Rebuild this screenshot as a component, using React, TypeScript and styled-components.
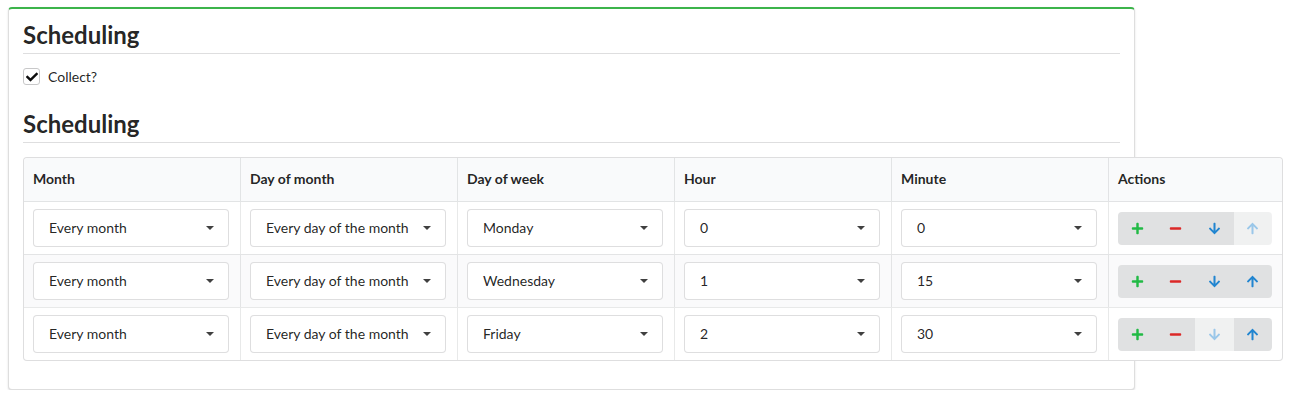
import React from 'react';
import styled, { createGlobalStyle, css } from 'styled-components';
import { FaPlus, FaMinus, FaArrowDown, FaArrowUp, FaCheck } from 'react-icons/fa';

const GlobalStyle = createGlobalStyle`
  html, body {
    margin: 0;
    padding: 0;
    background: #ffffff;
  }
  body {
    padding: 7px 0 0 8px;
    font-family: Lato, 'Noto Sans', 'Liberation Sans', sans-serif;
    font-size: 14px;
    line-height: 1.4285em;
    color: rgba(0, 0, 0, 0.87);
  }
  * {
    box-sizing: border-box;
  }
`;

const Segment = styled.div`
  width: 1127px;
  background: #fff;
  border: 1px solid rgba(34, 36, 38, 0.15);
  border-top: 2px solid #3cb44b;
  border-radius: 4px;
  box-shadow: 0 1px 2px 0 rgba(34, 36, 38, 0.15);
  padding: 14px;
`;

const DividingHeader = styled.h3<{ $first?: boolean }>`
  font-family: Lato, 'Noto Sans', sans-serif;
  font-weight: 700;
  font-size: 24px;
  line-height: 30px;
  margin: ${(p) => (p.$first ? '-3px 0 14px' : '24px 0 14px')};
  padding-bottom: 3px;
  border-bottom: 1px solid rgba(34, 36, 38, 0.15);
  color: rgba(0, 0, 0, 0.87);
`;

const CheckboxField = styled.label`
  display: flex;
  align-items: center;
  gap: 8px;
  height: 17px;
  font-size: 14px;
  cursor: pointer;
`;

const Box = styled.span`
  width: 17px;
  height: 17px;
  border: 1px solid #c8c8c9;
  border-radius: 3px;
  display: flex;
  align-items: center;
  justify-content: center;
  color: rgba(0, 0, 0, 0.95);
`;

const Table = styled.table`
  width: 1260px;
  table-layout: fixed;
  border-collapse: separate;
  border-spacing: 0;
  border: 1px solid rgba(34, 36, 38, 0.15);
  border-radius: 4px;
  margin: 14px 0;
  background: #fff;
`;

const Th = styled.th`
  text-align: left;
  font-weight: 700;
  font-size: 14px;
  line-height: 20px;
  padding: 11px 10px 12px 9px;
  background: #f9fafb;
  border-bottom: 1px solid rgba(34, 36, 38, 0.1);
  & + & {
    border-left: 1px solid rgba(34, 36, 38, 0.1);
  }
  &:first-child {
    border-top-left-radius: 4px;
  }
  &:last-child {
    border-top-right-radius: 4px;
  }
`;

const Tr = styled.tr`
  &:nth-child(even) td {
    background: rgba(0, 0, 50, 0.02);
  }
  & + & td {
    border-top: 1px solid rgba(34, 36, 38, 0.1);
  }
`;

const Td = styled.td`
  padding: 7px 10px 7px 9px;
  vertical-align: middle;
  & + & {
    border-left: 1px solid rgba(34, 36, 38, 0.1);
  }
`;

const Select = styled.div`
  position: relative;
  height: 38px;
  width: 196px;
  background: #fff;
  border: 1px solid rgba(34, 36, 38, 0.15);
  border-radius: 4px;
  padding: 0 30px 0 15px;
  display: flex;
  align-items: center;
  font-size: 14px;
  white-space: nowrap;
  overflow: hidden;

  &::after {
    content: '';
    position: absolute;
    right: 14px;
    top: 50%;
    margin-top: -2px;
    border-left: 4px solid transparent;
    border-right: 4px solid transparent;
    border-top: 4px solid rgba(0, 0, 0, 0.75);
  }
`;

const ButtonGroup = styled.div`
  display: flex;
  width: 154px;
  height: 33px;
`;

const ActionButton = styled.button<{ $color: string; $disabled?: boolean }>`
  flex: 1;
  border: none;
  margin: 0;
  padding: 0;
  background: #e0e1e2;
  color: ${(p) => p.$color};
  display: flex;
  align-items: center;
  justify-content: center;
  cursor: pointer;
  &:first-child {
    border-radius: 4px 0 0 4px;
  }
  &:last-child {
    border-radius: 0 4px 4px 0;
  }
  ${(p) =>
    p.$disabled &&
    css`
      opacity: 0.45;
      cursor: default;
    `}
`;

const GREEN = '#21ba45';
const RED = '#db2828';
const BLUE = '#2185d0';

const rows = [
  { month: 'Every month', dom: 'Every day of the month', dow: 'Monday', hour: '0', minute: '0' },
  { month: 'Every month', dom: 'Every day of the month', dow: 'Wednesday', hour: '1', minute: '15' },
  { month: 'Every month', dom: 'Every day of the month', dow: 'Friday', hour: '2', minute: '30' },
];

const App: React.FC = () => {
  return (
    <>
      <GlobalStyle />
      <Segment>
        <DividingHeader $first>Scheduling</DividingHeader>
        <CheckboxField>
          <Box>
            <FaCheck size={12} />
          </Box>
          Collect?
        </CheckboxField>
        <DividingHeader>Scheduling</DividingHeader>
        <Table>
          <colgroup>
            <col style={{ width: 216 }} />
            <col style={{ width: 217 }} />
            <col style={{ width: 217 }} />
            <col style={{ width: 217 }} />
            <col style={{ width: 217 }} />
            <col />
          </colgroup>
          <thead>
            <tr>
              <Th>Month</Th>
              <Th>Day of month</Th>
              <Th>Day of week</Th>
              <Th>Hour</Th>
              <Th>Minute</Th>
              <Th>Actions</Th>
            </tr>
          </thead>
          <tbody>
            {rows.map((r, i) => (
              <Tr key={i}>
                <Td><Select>{r.month}</Select></Td>
                <Td><Select>{r.dom}</Select></Td>
                <Td><Select>{r.dow}</Select></Td>
                <Td><Select>{r.hour}</Select></Td>
                <Td><Select>{r.minute}</Select></Td>
                <Td>
                  <ButtonGroup>
                    <ActionButton $color={GREEN}><FaPlus size={13} /></ActionButton>
                    <ActionButton $color={RED}><FaMinus size={13} /></ActionButton>
                    <ActionButton $color={BLUE} $disabled={i === rows.length - 1}>
                      <FaArrowDown size={13} />
                    </ActionButton>
                    <ActionButton $color={BLUE} $disabled={i === 0}>
                      <FaArrowUp size={13} />
                    </ActionButton>
                  </ButtonGroup>
                </Td>
              </Tr>
            ))}
          </tbody>
        </Table>
      </Segment>
    </>
  );
};

export default App;
